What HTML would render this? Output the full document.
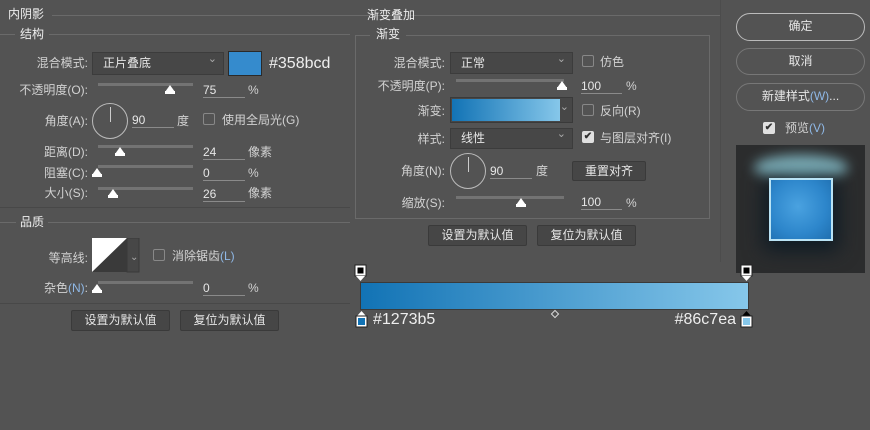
<!DOCTYPE html>
<html><head><meta charset="utf-8"><style>
*{margin:0;padding:0;box-sizing:border-box}
body{width:870px;height:430px;background:#535353;position:relative;overflow:hidden;font-family:"Liberation Sans","Noto Sans CJK SC",sans-serif;font-size:12px;color:#d2d2d2}
.a{position:absolute;white-space:nowrap;line-height:14px}
.r{text-align:right}
.ln{position:absolute;height:1px;background:#6a6a6a}
.sel{position:absolute;background:#474747;border:1px solid #3c3c3c;color:#e6e6e6;padding-left:10px;line-height:20px}
.sel:after{content:"⌄";position:absolute;right:6px;top:-4px;color:#aaa;font-size:11px}
.trk{position:absolute;height:3px;background:#737373}
.th{position:absolute;width:0;height:0;border-left:5px solid transparent;border-right:5px solid transparent;border-bottom:7px solid #fff}
.th:after{content:"";position:absolute;left:-5px;top:6px;width:10px;height:3px;background:#fff}
.in{position:absolute;border-bottom:1px solid #8a8a8a;height:16px;color:#e6e6e6;line-height:16px}
.cb{position:absolute;width:12px;height:12px;border:1px solid #888;border-radius:2px}
.cbk{position:absolute;width:12px;height:12px;background:#e0e0e0;border-radius:2px;color:#333;font-size:10px;line-height:12px;text-align:center;font-weight:bold}
.btn{position:absolute;background:#464646;border:1px solid #3a3a3a;border-radius:2px;color:#e6e6e6;text-align:center;line-height:19px}
.pill{position:absolute;border:1px solid #8a8a8a;border-radius:14px;text-align:center;color:#e6e6e6;line-height:25px}
.dial{position:absolute;border:1px solid #bbb;border-radius:50%}
.dial:after{content:"";position:absolute;left:50%;top:3px;width:1px;height:15px;background:#ccc}
.blu{color:#8fb8e6}
.stop{position:absolute;z-index:5}
</style></head><body>
<!-- left -->
<div class="a" style="left:8px;top:7px;color:#eee">内阴影</div>
<div class="ln" style="left:52px;top:15px;width:668px"></div>
<div class="a" style="left:20px;top:27px;color:#eee">结构</div>
<div class="ln" style="left:0;top:34px;width:15px"></div>
<div class="ln" style="left:49px;top:34px;width:301px"></div>
<div class="a r" style="left:0;width:88px;top:56px">混合模式:</div>
<div class="sel" style="left:92px;top:52px;width:132px;height:23px">正片叠底</div>
<div style="position:absolute;left:228px;top:51px;width:34px;height:25px;background:#358bcd;border:1px solid #2a2a2a"></div>
<div class="a" style="left:269px;top:55px;font-size:16px;line-height:18px;color:#eee">#358bcd</div>
<div class="a r" style="left:0;width:88px;top:83px">不透明度(O):</div>
<div class="trk" style="left:98px;top:83px;width:95px"></div><div class="th" style="left:165px;top:85px"></div>
<div class="in" style="left:203px;top:82px;width:42px">75</div><div class="a" style="left:248px;top:83px">%</div>
<div class="a r" style="left:0;width:88px;top:114px">角度(A):</div>
<div class="dial" style="left:92px;top:103px;width:36px;height:36px"></div>
<div class="in" style="left:132px;top:112px;width:42px">90</div><div class="a" style="left:177px;top:114px">度</div>
<div class="cb" style="left:203px;top:113px"></div><div class="a" style="left:222px;top:113px">使用全局光(G)</div>
<div class="a r" style="left:0;width:88px;top:145px">距离(D):</div>
<div class="trk" style="left:98px;top:145px;width:95px"></div><div class="th" style="left:115px;top:147px"></div>
<div class="in" style="left:203px;top:144px;width:42px">24</div><div class="a" style="left:248px;top:145px">像素</div>
<div class="a r" style="left:0;width:88px;top:166px">阻塞(C):</div>
<div class="trk" style="left:98px;top:165px;width:95px"></div><div class="th" style="left:92px;top:168px"></div>
<div class="in" style="left:203px;top:165px;width:42px">0</div><div class="a" style="left:248px;top:166px">%</div>
<div class="a r" style="left:0;width:88px;top:186px">大小(S):</div>
<div class="trk" style="left:98px;top:187px;width:95px"></div><div class="th" style="left:108px;top:189px"></div>
<div class="in" style="left:203px;top:186px;width:42px">26</div><div class="a" style="left:248px;top:186px">像素</div>
<div class="ln" style="left:0;top:207px;width:350px;background:#484848"></div>
<div class="a" style="left:20px;top:215px;color:#eee">品质</div>
<div class="ln" style="left:0;top:222px;width:16px"></div>
<div class="ln" style="left:48px;top:222px;width:302px"></div>
<div class="a r" style="left:0;width:88px;top:251px">等高线:</div>
<svg style="position:absolute;left:92px;top:238px" width="48" height="35"><rect x="0" y="0" width="35" height="34" fill="#fff"/><polygon points="35,0 35,34 0,34" fill="#3a3a3a"/><rect x="35" y="0" width="12" height="34" fill="#474747" stroke="#3a3a3a"/><text x="38" y="22" fill="#aaa" font-size="10">⌄</text></svg>
<div class="cb" style="left:153px;top:249px"></div><div class="a" style="left:172px;top:249px">消除锯齿<span class="blu">(L)</span></div>
<div class="a r" style="left:0;width:88px;top:281px">杂色<span class="blu">(N)</span>:</div>
<div class="trk" style="left:98px;top:281px;width:95px"></div><div class="th" style="left:92px;top:284px"></div>
<div class="in" style="left:203px;top:280px;width:42px">0</div><div class="a" style="left:248px;top:281px">%</div>
<div class="ln" style="left:0;top:303px;width:350px;background:#484848"></div>
<div class="btn" style="left:71px;top:310px;width:99px;height:21px">设置为默认值</div>
<div class="btn" style="left:180px;top:310px;width:99px;height:21px">复位为默认值</div>
<!-- middle -->
<div class="a" style="left:367px;top:8px;color:#eee">渐变叠加</div>
<div style="position:absolute;left:355px;top:35px;width:355px;height:184px;border:1px solid #6a6a6a"></div>
<div class="a" style="left:370px;top:27px;color:#eee;background:#535353;padding:0 6px">渐变</div>
<div class="a r" style="left:355px;width:90px;top:56px">混合模式:</div>
<div class="sel" style="left:450px;top:52px;width:123px;height:22px">正常</div>
<div class="cb" style="left:582px;top:55px"></div><div class="a" style="left:600px;top:55px">仿色</div>
<div class="a r" style="left:355px;width:90px;top:79px">不透明度(P):</div>
<div class="trk" style="left:456px;top:79px;width:108px"></div><div class="th" style="left:557px;top:81px"></div>
<div class="in" style="left:581px;top:78px;width:41px">100</div><div class="a" style="left:626px;top:79px">%</div>
<div class="a r" style="left:355px;width:90px;top:104px">渐变:</div>
<div style="position:absolute;left:450px;top:97px;width:123px;height:26px;background:#474747;border:1px solid #3a3a3a"><div style="position:absolute;left:1px;top:1px;width:108px;height:22px;background:linear-gradient(90deg,#1273b5,#86c7ea)"></div><span style="position:absolute;right:3px;top:2px;color:#aaa;font-size:11px">⌄</span></div>
<div class="cb" style="left:582px;top:104px"></div><div class="a" style="left:600px;top:104px">反向(R)</div>
<div class="a r" style="left:355px;width:90px;top:132px">样式:</div>
<div class="sel" style="left:450px;top:128px;width:123px;height:21px;line-height:19px">线性</div>
<div class="cbk" style="left:582px;top:131px">✔</div><div class="a" style="left:600px;top:131px">与图层对齐(I)</div>
<div class="a r" style="left:355px;width:90px;top:164px">角度(N):</div>
<div class="dial" style="left:450px;top:153px;width:36px;height:36px"></div>
<div class="in" style="left:490px;top:163px;width:42px">90</div><div class="a" style="left:536px;top:164px">度</div>
<div class="btn" style="left:572px;top:161px;width:74px;height:20px">重置对齐</div>
<div class="a r" style="left:355px;width:90px;top:196px">缩放(S):</div>
<div class="trk" style="left:456px;top:196px;width:108px"></div><div class="th" style="left:516px;top:198px"></div>
<div class="in" style="left:581px;top:194px;width:41px">100</div><div class="a" style="left:626px;top:196px">%</div>
<div class="btn" style="left:428px;top:225px;width:99px;height:21px">设置为默认值</div>
<div class="btn" style="left:537px;top:225px;width:99px;height:21px">复位为默认值</div>
<!-- right -->
<div style="position:absolute;left:720px;top:0;width:1px;height:262px;background:#4c4c4c"></div>
<div class="pill" style="left:736px;top:13px;width:129px;height:28px;border-color:#bbb">确定</div>
<div class="pill" style="left:736px;top:48px;width:129px;height:27px;border-color:#777">取消</div>
<div class="pill" style="left:736px;top:83px;width:129px;height:28px;border-color:#777">新建样式<span class="blu">(W)</span>...</div>
<div class="cbk" style="left:763px;top:122px">✔</div><div class="a" style="left:785px;top:121px">预览<span class="blu">(V)</span></div>
<div style="position:absolute;left:736px;top:145px;width:129px;height:128px;background:#2b2c2d;overflow:hidden">
<div style="position:absolute;left:18px;top:10px;width:94px;height:25px;border-radius:50%;background:#8ac4d0;filter:blur(6px);opacity:.85"></div>
<div style="position:absolute;left:28px;top:33px;width:74px;height:72px;background:#0c1a24;filter:blur(10px)"></div>
<div style="position:absolute;left:33px;top:33px;width:64px;height:63px;border:2px solid #b9e3f5;background:radial-gradient(circle at 45% 45%,#4aa2e0,#2d86cb 60%,#1f6fb0)"></div>
</div>
<!-- gradient editor -->
<div style="position:absolute;left:360px;top:282px;width:389px;height:28px;background:#3a3a3a"></div>
<div style="position:absolute;left:361px;top:283px;width:387px;height:26px;background:linear-gradient(90deg,#1273b5,#86c7ea)"></div>
<svg class="stop" style="left:354px;top:264px" width="14" height="18"><rect x="1" y="1" width="11" height="11" fill="#fff" stroke="#222"/><rect x="3.5" y="3.5" width="6" height="6" fill="#000"/><polygon points="2,12 11,12 6.5,17" fill="#fff"/></svg>
<svg class="stop" style="left:740px;top:264px" width="14" height="18"><rect x="1" y="1" width="11" height="11" fill="#fff" stroke="#222"/><rect x="3.5" y="3.5" width="6" height="6" fill="#000"/><polygon points="2,12 11,12 6.5,17" fill="#fff"/></svg>
<svg class="stop" style="left:355px;top:310px" width="14" height="18"><polygon points="6.5,1 11,6 2,6" fill="#fff"/><rect x="1" y="6" width="11" height="11" fill="#fff" stroke="#222"/><rect x="3" y="8" width="7" height="7" fill="#1273b5"/></svg>
<svg class="stop" style="left:740px;top:310px" width="14" height="18"><polygon points="6.5,1 11,6 2,6" fill="#000"/><rect x="1" y="6" width="11" height="11" fill="#fff" stroke="#222"/><rect x="3" y="8" width="7" height="7" fill="#86c7ea"/></svg>
<div style="position:absolute;left:552px;top:311px;width:6px;height:6px;border:1px solid #ddd;transform:rotate(45deg)"></div>
<div class="a" style="left:373px;top:311px;font-size:16px;line-height:18px;color:#eee">#1273b5</div>
<div class="a r" style="left:636px;width:100px;top:311px;font-size:16px;line-height:18px;color:#eee">#86c7ea</div>
</body></html>
